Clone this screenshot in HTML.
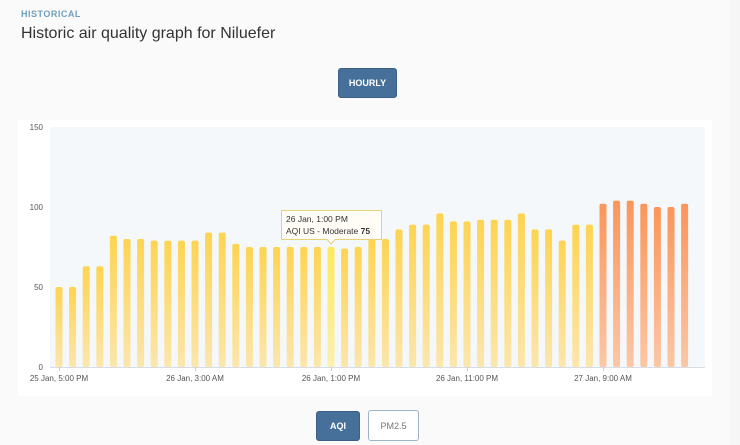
<!DOCTYPE html>
<html><head><meta charset="utf-8"><style>
body{margin:0;width:740px;height:445px;background:#fafafa;font-family:"Liberation Sans",sans-serif;position:relative;overflow:hidden}
.strip{position:absolute;left:730px;top:0;width:10px;height:445px;background:#f6f6f6}
.h1{position:absolute;left:21px;top:9px;font-size:9px;font-weight:bold;color:#6f9fbf;letter-spacing:.5px}
.h2{position:absolute;left:21px;top:25px;font-size:16px;color:#333}
.btn{position:absolute;border-radius:3px;font-size:9px;font-weight:bold;display:flex;align-items:center;justify-content:center;box-sizing:border-box}
.dark{background:#46709a;color:#fff;border:1px solid #3b5f85}
.light{background:#fff;color:#777;border:1px solid #9fb3c6;font-weight:normal}
</style></head><body>
<div class="strip"></div>
<div class="h1">HISTORICAL</div>
<div class="h2">Historic air quality graph for Niluefer</div>
<div class="btn dark" style="left:338px;top:68px;width:59px;height:30px">HOURLY</div>
<svg style="position:absolute;left:0;top:0" width="740" height="445">
<defs>
<linearGradient id="y" x1="0" y1="0" x2="0" y2="1"><stop offset="0" stop-color="#fdd451"/><stop offset="1" stop-color="#fbe6ad"/></linearGradient>
<linearGradient id="o" x1="0" y1="0" x2="0" y2="1"><stop offset="0" stop-color="#fb955a"/><stop offset="1" stop-color="#fbc7a6"/></linearGradient>
<linearGradient id="h" x1="0" y1="0" x2="0" y2="1"><stop offset="0" stop-color="#fde95a"/><stop offset="1" stop-color="#fbf0b0"/></linearGradient>
</defs>
<rect x="18" y="120" width="694" height="276" fill="#fff"/>
<rect x="50" y="127" width="655" height="240" fill="#f5f8fa"/>
<line x1="50" y1="367.5" x2="705" y2="367.5" stroke="#d8dde3"/>
<g font-size="8" fill="#555" text-anchor="end">
<text x="43" y="130">150</text><text x="43" y="210">100</text><text x="43" y="290">50</text><text x="43" y="370">0</text>
</g>
<g id="bars"></g>
<g font-size="8" fill="#555" text-anchor="middle">
<text x="59" y="381">25 Jan, 5:00 PM</text>
<text x="195" y="381">26 Jan, 3:00 AM</text>
<text x="331" y="381">26 Jan, 1:00 PM</text>
<text x="467" y="381">26 Jan, 11:00 PM</text>
<text x="603" y="381">27 Jan, 9:00 AM</text>
</g>
<g stroke="#ccd" ><line x1="59.5" y1="367" x2="59.5" y2="371"/><line x1="195.5" y1="367" x2="195.5" y2="371"/><line x1="331.5" y1="367" x2="331.5" y2="371"/><line x1="467.5" y1="367" x2="467.5" y2="371"/><line x1="603.5" y1="367" x2="603.5" y2="371"/></g>
<path d="M281.5 210.5 H381.5 V239.5 H335 L331 244 L327 239.5 H281.5 Z" fill="#fffdf5" fill-opacity=".95" stroke="#e8cf7a"/>
<text x="286" y="222" font-size="8.5" fill="#333">26 Jan, 1:00 PM</text>
<text x="286" y="234" font-size="8.5" fill="#333">AQI US - Moderate <tspan font-weight="bold">75</tspan></text>
</svg>
<div class="btn dark" style="left:316px;top:411px;width:44px;height:30px">AQI</div>
<div class="btn light" style="left:368px;top:410px;width:51px;height:31px">PM2.5</div>
<script>
var v=[50,50,63,63,82,80,80,79,79,79,79,84,84,77,75,75,75,75,75,75,75,74,75,80,80,86,89,89,96,91,91,92,92,92,96,86,86,79,89,89,102,104,104,102,100,100,102];
var g=document.getElementById('bars'),s='';
v.forEach(function(a,i){var x=59+i*13.6-3.5,h=a*1.6,f=i==20?'h':(i>=40?'o':'y');
s+='<rect x="'+x.toFixed(1)+'" y="'+(367-h)+'" width="7" height="'+h+'" rx="2" fill="url(#'+f+')"/>';});
g.innerHTML=s;
</script>
</body></html>
